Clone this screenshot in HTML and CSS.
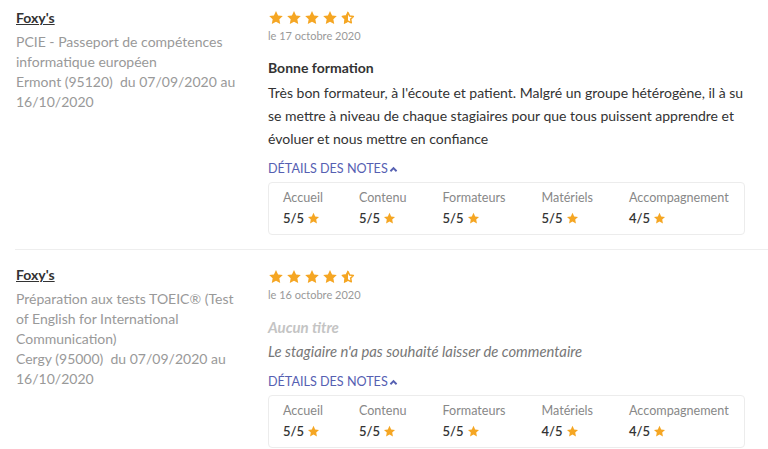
FILE: index.html
```html
<!DOCTYPE html>
<html lang="fr">
<head>
<meta charset="utf-8">
<link rel="stylesheet" href="styles.css">
</head>
<body>
<svg class="defs" width="0" height="0" aria-hidden="true">
  <defs>
    <symbol id="star" viewBox="0 0 24 24">
      <path d="M12 1.6l3.1 6.5 7.1.9-5.2 4.9 1.3 7.1L12 17.6l-6.3 3.4 1.3-7.1L1.8 9l7.1-.9z" fill="#f5a623"/>
    </symbol>
    <clipPath id="lefthalf"><rect x="0" y="0" width="12" height="24"/></clipPath>
    <symbol id="starhalf" viewBox="0 0 24 24">
      <path d="M12 1.6l3.1 6.5 7.1.9-5.2 4.9 1.3 7.1L12 17.6l-6.3 3.4 1.3-7.1L1.8 9l7.1-.9z" fill="#f5a623" clip-path="url(#lefthalf)"/>
      <path d="M12 3.9l2.5 5.2 5.6.7-4.1 3.9 1 5.6L12 16.6l-5 2.7 1-5.6-4.1-3.9 5.6-.7z" fill="none" stroke="#f5a623" stroke-width="2.2" stroke-linejoin="round"/>
    </symbol>
  </defs>
</svg>

<div class="list">
  <div class="review first">
    <div class="who">
      <a class="name" href="#">Foxy's</a>
      <div class="course">PCIE - Passeport de compétences informatique européen<br>Ermont (95120)&nbsp; du 07/09/2020 au 16/10/2020</div>
    </div>
    <div class="body">
      <div class="stars">
        <svg class="st"><use href="#star"/></svg><svg class="st"><use href="#star"/></svg><svg class="st"><use href="#star"/></svg><svg class="st"><use href="#star"/></svg><svg class="st"><use href="#starhalf"/></svg>
      </div>
      <div class="date">le 17 octobre 2020</div>
      <div class="title">Bonne formation</div>
      <p class="text">Très bon formateur, à l'écoute et patient. Malgré un groupe hétérogène, il à su se mettre à niveau de chaque stagiaires pour que tous puissent apprendre et évoluer et nous mettre en confiance</p>
      <a class="details" href="#">Détails des notes<svg class="chev" viewBox="0 0 10 8"><path d="M1.5 6L5 2.5 8.5 6" fill="none" stroke="currentColor" stroke-width="2.2"/></svg></a>
      <div class="notes">
        <div class="note"><div class="lab">Accueil</div><div class="val">5/5 <svg class="ms"><use href="#star"/></svg></div></div>
        <div class="note"><div class="lab">Contenu</div><div class="val">5/5 <svg class="ms"><use href="#star"/></svg></div></div>
        <div class="note"><div class="lab">Formateurs</div><div class="val">5/5 <svg class="ms"><use href="#star"/></svg></div></div>
        <div class="note"><div class="lab">Matériels</div><div class="val">5/5 <svg class="ms"><use href="#star"/></svg></div></div>
        <div class="note"><div class="lab">Accompagnement</div><div class="val">4/5 <svg class="ms"><use href="#star"/></svg></div></div>
      </div>
    </div>
  </div>

  <div class="review">
    <div class="who">
      <a class="name" href="#">Foxy's</a>
      <div class="course">Préparation aux tests TOEIC® (Test of English for International Communication)<br>Cergy (95000)&nbsp; du 07/09/2020 au 16/10/2020</div>
    </div>
    <div class="body">
      <div class="stars">
        <svg class="st"><use href="#star"/></svg><svg class="st"><use href="#star"/></svg><svg class="st"><use href="#star"/></svg><svg class="st"><use href="#star"/></svg><svg class="st"><use href="#starhalf"/></svg>
      </div>
      <div class="date">le 16 octobre 2020</div>
      <div class="title empty">Aucun titre</div>
      <p class="text empty">Le stagiaire n'a pas souhaité laisser de commentaire</p>
      <a class="details" href="#">Détails des notes<svg class="chev" viewBox="0 0 10 8"><path d="M1.5 6L5 2.5 8.5 6" fill="none" stroke="currentColor" stroke-width="2.2"/></svg></a>
      <div class="notes">
        <div class="note"><div class="lab">Accueil</div><div class="val">5/5 <svg class="ms"><use href="#star"/></svg></div></div>
        <div class="note"><div class="lab">Contenu</div><div class="val">5/5 <svg class="ms"><use href="#star"/></svg></div></div>
        <div class="note"><div class="lab">Formateurs</div><div class="val">5/5 <svg class="ms"><use href="#star"/></svg></div></div>
        <div class="note"><div class="lab">Matériels</div><div class="val">4/5 <svg class="ms"><use href="#star"/></svg></div></div>
        <div class="note"><div class="lab">Accompagnement</div><div class="val">4/5 <svg class="ms"><use href="#star"/></svg></div></div>
      </div>
    </div>
  </div>
</div>
</body>
</html>
```

FILE: styles.css
```css
* { box-sizing: border-box; }
html, body { margin: 0; padding: 0; background: #fff; }
body {
  font-family: Lato, "Open Sans", sans-serif;
  color: #333;
  font-size: 14px;
  overflow: hidden;
}
.defs { position: absolute; width: 0; height: 0; }

.list { margin-left: 15px; }

.review {
  display: flex;
  padding: 19px 0 14px;
  border-top: 1px solid #eeeeee;
}
.review.first { padding-top: 10px; border-top: none; }

.who {
  width: 253px;
  flex: none;
  padding: 0 26px 0 1px;
}
.name {
  display: block;
  font-weight: 700;
  font-size: 14px;
  line-height: 16px;
  color: #333;
  text-decoration: underline;
  margin-bottom: 6px;
}
.review:not(.first) .name { margin-top: -2px; }
.course {
  color: #999;
  font-size: 14px;
  line-height: 20px;
}

.body {
  width: 477px;
  flex: none;
}
.stars { display: flex; gap: 2px; height: 16px; }
.st { width: 16px; height: 16px; display: block; }

.date {
  margin-top: 3px;
  font-size: 11px;
  line-height: 14px;
  color: #999;
}
.title {
  margin-top: 15px;
  font-weight: 700;
  font-size: 14px;
  line-height: 20px;
  color: #333;
}
.title.empty { color: #c4c4c4; font-style: italic; font-size: 15px; }
.text {
  margin: 3px 0 0;
  font-size: 14px;
  line-height: 23px;
  color: #333;
}
.text.empty { font-style: italic; color: #777; font-size: 14.8px; }

.details {
  display: flex;
  align-items: center;
  gap: 1px;
  margin-top: 11px;
  font-size: 12.6px;
  line-height: 16px;
  text-transform: uppercase;
  color: #5660b2;
  text-decoration: none;
}
.chev { width: 9px; height: 7px; display: block; }

.notes {
  margin-top: 5px;
  border: 1px solid #ececec;
  border-radius: 4px;
  padding: 7px 14px 8px;
  display: flex;
  gap: 36px;
}
.lab {
  font-size: 12.6px;
  line-height: 16px;
  color: #888;
}
.val {
  margin-top: 4px;
  font-size: 13px;
  line-height: 16px;
  font-weight: 600;
  color: #333;
  display: flex;
  align-items: center;
  gap: 3px;
}
.ms { width: 13px; height: 13px; display: block; }
```
